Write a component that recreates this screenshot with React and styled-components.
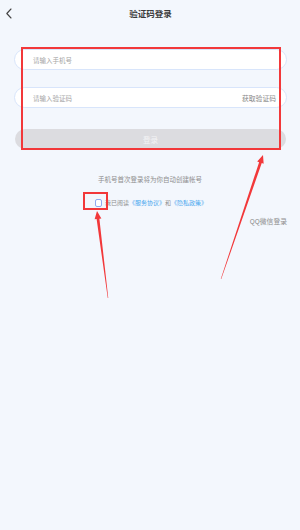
import React from "react";
import styled, { createGlobalStyle } from "styled-components";

const Global = createGlobalStyle`
  html, body { margin: 0; padding: 0; background: #f3f7fd; }
  body { font-family: "Noto Sans CJK SC", "Noto Sans", sans-serif; }
  * { box-sizing: border-box; }
`;

const Page = styled.div`
  position: relative;
  width: 300px;
  height: 530px;
  background: #f3f7fd;
  overflow: hidden;
`;

const Header = styled.div`
  height: 27px;
  display: flex;
  align-items: center;
  justify-content: center;
  position: relative;
`;

const Back = styled.svg`
  position: absolute;
  left: 5px;
  top: 8px;
`;

const Title = styled.div`
  font-size: 8.5px;
  font-weight: 700;
  color: #3a3a3a;
  margin-top: -1px;
  padding-left: 1px;
`;

const Form = styled.div`
  padding: 22px 13px 0 14px;
  display: flex;
  flex-direction: column;
`;

const Field = styled.div`
  height: 21px;
  border: 1px solid #d8e5fb;
  border-radius: 11px;
  background: #fff;
  display: flex;
  align-items: center;
  justify-content: space-between;
  padding: 0 10px 0 18px;
  margin-bottom: ${(p) => p.$mb || 0}px;
`;

const Placeholder = styled.span`
  font-size: 6.5px;
  color: #a6a6a6;
`;

const GetCode = styled.span`
  font-size: 6.8px;
  color: #8a8a8a;
`;

const LoginButton = styled.div`
  margin: 0 1px;
  height: 20px;
  border-radius: 10px;
  background: #dcdce0;
  color: #f4f4f6;
  font-size: 7.5px;
  display: flex;
  align-items: center;
  justify-content: center;
`;

const Hint = styled.div`
  margin-top: 25px;
  text-align: center;
  font-size: 6.5px;
  color: #8e8e8e;
`;

const AgreeRow = styled.div`
  margin-top: 14px;
  display: flex;
  align-items: center;
  justify-content: center;
  gap: 3px;
  font-size: 6px;
  color: #8e8e8e;
  padding-left: 2px;
`;

const Check = styled.span`
  width: 7px;
  height: 8px;
  border: 1px solid #8eaaf0;
  border-radius: 2px;
  background: #fff;
`;

const Link = styled.span`
  color: #49a6ee;
`;

const Other = styled.div`
  margin-top: 9px;
  padding-right: 13px;
  text-align: right;
  font-size: 6.8px;
  color: #8e8e8e;
`;

const RedBox = styled.div`
  position: absolute;
  left: ${(p) => p.$x}px;
  top: ${(p) => p.$y}px;
  width: ${(p) => p.$w}px;
  height: ${(p) => p.$h}px;
  border: 2px solid #f2383a;
  pointer-events: none;
`;

const Overlay = styled.svg`
  position: absolute;
  left: 0;
  top: 0;
  pointer-events: none;
`;

function arrowPoints(tx, ty, hx, hy) {
  const dx = hx - tx;
  const dy = hy - ty;
  const len = Math.hypot(dx, dy);
  const ux = dx / len;
  const uy = dy / len;
  const nx = -uy;
  const ny = ux;
  const headLen = 8;
  const headW = 3.4;
  const shaftW = 1.4;
  const bx = hx - ux * headLen;
  const by = hy - uy * headLen;
  const pts = [
    [tx + nx * 0.25, ty + ny * 0.25],
    [bx + nx * shaftW, by + ny * shaftW],
    [bx + nx * headW, by + ny * headW],
    [hx, hy],
    [bx - nx * headW, by - ny * headW],
    [bx - nx * shaftW, by - ny * shaftW],
    [tx - nx * 0.25, ty - ny * 0.25],
  ];
  return pts.map((p) => p.map((v) => v.toFixed(2)).join(",")).join(" ");
}

export default function App() {
  return (
    <Page>
      <Global />
      <Header>
        <Back width="8" height="11" viewBox="0 0 8 11">
          <path d="M6 1 L1.8 5.5 L6 10" fill="none" stroke="#444" strokeWidth="1.1" strokeLinecap="round" strokeLinejoin="round" />
        </Back>
        <Title>验证码登录</Title>
      </Header>
      <Form>
        <Field $mb={17}>
          <Placeholder>请输入手机号</Placeholder>
        </Field>
        <Field $mb={21}>
          <Placeholder>请输入验证码</Placeholder>
          <GetCode>获取验证码</GetCode>
        </Field>
        <LoginButton>登录</LoginButton>
      </Form>
      <Hint>手机号首次登录将为你自动创建帐号</Hint>
      <AgreeRow>
        <Check />
        <span>
          我已阅读<Link>《服务协议》</Link>和<Link>《隐私政策》</Link>
        </span>
      </AgreeRow>
      <Other>QQ微信登录</Other>

      <RedBox $x={21} $y={47} $w={260} $h={103} />
      <RedBox $x={83} $y={192} $w={25} $h={18} />
      <Overlay width="300" height="530" viewBox="0 0 300 530">
        <polygon points={arrowPoints(108, 298, 97, 211)} fill="#f2383a" />
        <polygon points={arrowPoints(221, 279, 263, 155)} fill="#f2383a" />
      </Overlay>
    </Page>
  );
}
